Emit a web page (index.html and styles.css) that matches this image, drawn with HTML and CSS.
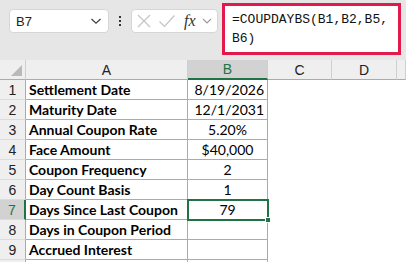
FILE: index.html
```html
<!DOCTYPE html>
<html lang="en">
<head>
  <meta charset="UTF-8">
  <title>COUPDAYBS</title>
  <link rel="stylesheet" href="styles.css">
</head>
<body>
  <div class="toolbar">
    <div class="namebox">
      <span>B7</span>
      <svg width="12" height="8" viewBox="0 0 12 8"><path d="M1.5 2 L6 6.2 L10.5 2" fill="none" stroke="#444" stroke-width="1.3"/></svg>
    </div>
    <div class="dots">
      <span></span><span></span><span></span>
    </div>
    <div class="fxbox">
      <svg width="16" height="16" viewBox="0 0 16 16"><path d="M2 2 L14 14 M14 2 L2 14" stroke="#c4c4c4" stroke-width="1.2"/></svg>
      <svg width="18" height="16" viewBox="0 0 18 16"><path d="M1.5 8.5 L6.5 13.5 L16.5 2.5" fill="none" stroke="#c4c4c4" stroke-width="1.2"/></svg>
      <span class="fx">fx</span>
      <svg width="10" height="8" viewBox="0 0 10 8"><path d="M1 2 L5 6 L9 2" fill="none" stroke="#9a9a9a" stroke-width="1.1"/></svg>
    </div>
    <div class="formula">=COUPDAYBS(B1,B2,B5,<br>B6)</div>
  </div>

  <div class="sheet">
    <div class="hd corner"><span class="tri"></span></div>
    <div class="hd">A</div>
    <div class="hd sel-col">B</div>
    <div class="hd">C</div>
    <div class="hd">D</div>
    <div class="hd"></div>

    <div class="rn">1</div><div class="c lbl">Settlement Date</div><div class="c val right">8/19/2026</div><div class="e"></div><div class="e"></div><div class="e"></div>
    <div class="rn">2</div><div class="c lbl">Maturity Date</div><div class="c val right">12/1/2031</div><div class="e"></div><div class="e"></div><div class="e"></div>
    <div class="rn">3</div><div class="c lbl">Annual Coupon Rate</div><div class="c val">5.20%</div><div class="e"></div><div class="e"></div><div class="e"></div>
    <div class="rn">4</div><div class="c lbl">Face Amount</div><div class="c val">$40,000</div><div class="e"></div><div class="e"></div><div class="e"></div>
    <div class="rn">5</div><div class="c lbl">Coupon Frequency</div><div class="c val">2</div><div class="e"></div><div class="e"></div><div class="e"></div>
    <div class="rn">6</div><div class="c lbl">Day Count Basis</div><div class="c val">1</div><div class="e"></div><div class="e"></div><div class="e"></div>
    <div class="rn sel-row">7</div><div class="c lbl">Days Since Last Coupon</div><div class="c val active">79<span class="handle"></span></div><div class="e"></div><div class="e"></div><div class="e"></div>
    <div class="rn">8</div><div class="c lbl">Days in Coupon Period</div><div class="c val"></div><div class="e"></div><div class="e"></div><div class="e"></div>
    <div class="rn">9</div><div class="c lbl">Accrued Interest</div><div class="c val"></div><div class="e"></div><div class="e"></div><div class="e"></div>
    <div class="rn last"></div><div class="c last"></div><div class="c last"></div><div class="e"></div><div class="e"></div><div class="e"></div>
  </div>
</body>
</html>
```

FILE: styles.css
```css
:root {
  --top-bg: #e6e6e6;
  --hd-bg: #efefef;
  --hd-line: #cfcfcf;
  --cell-line: #ababab;
  --green: #217346;
  --red: #e3194b;
  --text: #000000;
}
* { box-sizing: border-box; margin: 0; padding: 0; }
body {
  width: 406px;
  height: 262px;
  overflow: hidden;
  background: #ffffff;
  font-family: 'Lato', 'Liberation Sans', sans-serif;
  color: var(--text);
}
.toolbar {
  height: 60px;
  background: var(--top-bg);
  display: flex;
  align-items: flex-start;
  padding: 3px 0 0 9px;
}
.namebox {
  width: 100px;
  height: 24px;
  margin-top: 6px;
  background: #fff;
  border: 1px solid #d6d6d6;
  border-radius: 4px;
  display: flex;
  align-items: center;
  justify-content: space-between;
  padding: 0 6px 0 6px;
  font-family: 'Liberation Sans', sans-serif;
  font-size: 13px;
  color: #222;
}
.dots {
  width: 22px;
  height: 24px;
  margin-top: 6px;
  display: flex;
  flex-direction: column;
  align-items: center;
  justify-content: center;
  gap: 2px;
}
.dots span {
  width: 2px;
  height: 2px;
  background: #333;
}
.fxbox {
  width: 87px;
  height: 24px;
  margin-top: 6px;
  background: #fff;
  border: 1px solid #d6d6d6;
  border-radius: 4px;
  display: flex;
  align-items: center;
  gap: 6px;
  padding-left: 4px;
}
.fx {
  font-family: 'Liberation Serif', serif;
  font-style: italic;
  font-size: 16px;
  color: #333;
  margin-left: 2px;
}
.formula {
  width: 179px;
  height: 52px;
  margin-left: 4px;
  background: #fff;
  border: 3px solid var(--red);
  padding: 4px 0 0 7px;
  font-family: 'Liberation Mono', monospace;
  font-size: 13px;
  line-height: 19px;
  color: #111;
}
.sheet {
  display: grid;
  grid-template-columns: 26px 162px 80px 64px 65px 1fr;
  grid-template-rows: repeat(10, 20px) 2px;
  font-size: 14px;
}
.hd {
  background: var(--hd-bg);
  border-right: 1px solid var(--hd-line);
  border-bottom: 1px solid var(--cell-line);
  display: flex;
  align-items: center;
  justify-content: center;
  font-family: 'Liberation Sans', sans-serif;
  font-size: 14px;
  color: #222;
}
.corner {
  position: relative;
}
.tri {
  position: absolute;
  right: 3px;
  bottom: 3px;
  width: 0;
  height: 0;
  border-left: 11px solid transparent;
  border-bottom: 11px solid #b9b9b9;
}
.sel-col {
  background: #d2d2d2;
  color: var(--green);
  border-bottom: 2px solid var(--green);
}
.rn {
  background: var(--hd-bg);
  border-right: 1px solid var(--cell-line);
  border-bottom: 1px solid #dcdcdc;
  display: flex;
  align-items: center;
  justify-content: center;
  font-family: 'Liberation Sans', sans-serif;
  font-size: 14px;
  color: #222;
}
.sel-row {
  background: #d2d2d2;
  color: var(--green);
  border-right: 2px solid var(--green);
}
.c {
  border-right: 1px solid var(--cell-line);
  border-bottom: 1px solid var(--cell-line);
  display: flex;
  align-items: center;
  white-space: nowrap;
}
.last {
  border-bottom: none;
}
.lbl {
  font-weight: bold;
  padding-left: 3px;
}
.val {
  justify-content: center;
}
.val.right {
  justify-content: flex-end;
  padding-right: 3px;
}
.active {
  position: relative;
  outline: 2px solid var(--green);
  outline-offset: -1px;
}
.handle {
  position: absolute;
  right: -4px;
  bottom: -4px;
  width: 6px;
  height: 6px;
  background: var(--green);
  border: 1px solid #fff;
}
.e {
  background: #fff;
}
```
